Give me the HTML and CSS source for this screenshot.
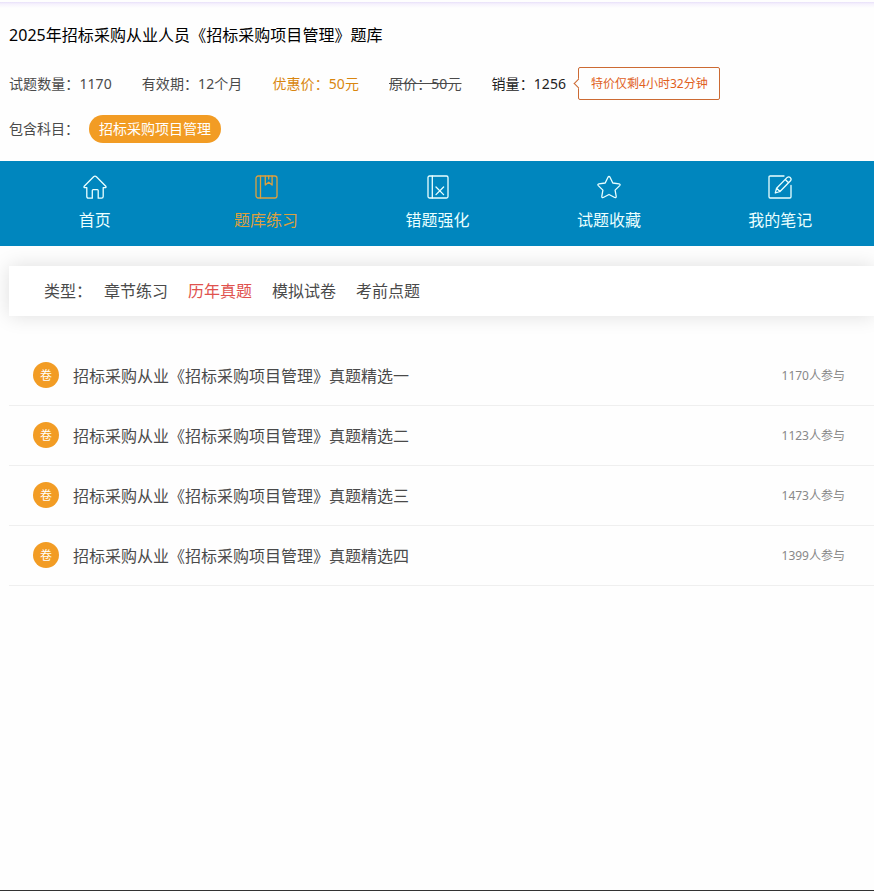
FILE: index.html
```html
<!DOCTYPE html>
<html lang="zh-CN">
<head>
  <meta charset="UTF-8">
  <meta name="viewport" content="width=device-width, initial-scale=1.0">
  <title>招标采购项目管理题库</title>
  <link rel="stylesheet" href="styles.css">
</head>
<body>
  <div class="header">
    <h1 class="title">2025年招标采购从业人员《招标采购项目管理》题库</h1>
    <div class="info">
      <span>试题数量：1170</span>
      <span>有效期：12个月</span>
      <span class="price">优惠价：50元</span>
      <span class="old-price">原价：50元</span>
      <span class="sales">销量：1256</span>
      <span class="countdown">特价仅剩4小时32分钟</span>
    </div>
    <div class="subject">
      <span>包含科目：</span>
      <a class="subject-tag">招标采购项目管理</a>
    </div>
  </div>

  <div class="nav">
    <a class="nav-item">
      <svg class="nav-icon" viewBox="0 0 24 24"><path d="M3.8 12.6H1.4Q.6 12.2 1.2 11.3L10.6 1.7Q12 .5 13.4 1.7L22.8 11.3Q23.4 12.2 22.6 12.6H20.2V21.5Q20.2 23.2 18.5 23.2H15.2V15.5Q15.2 14.6 14.3 14.6H10.2Q9.3 14.6 9.3 15.5V23.2H5.5Q3.8 23.2 3.8 21.5Z"/></svg>
      <span>首页</span>
    </a>
    <a class="nav-item active">
      <svg class="nav-icon" viewBox="0 0 24 24"><rect x="2" y="1" width="21" height="22" rx="2.2"/><path d="M6.5 1V23M11.3 1V10L14.7 7.2L18.1 10V1M14.7 1V4"/></svg>
      <span>题库练习</span>
    </a>
    <a class="nav-item">
      <svg class="nav-icon" viewBox="0 0 24 24"><rect x="2" y="1" width="20" height="22" rx="1.5"/><path d="M6.3 1V23M10 12L17.6 19.6M17.6 12L10 19.6"/></svg>
      <span>错题强化</span>
    </a>
    <a class="nav-item">
      <svg class="nav-icon" viewBox="0 0 24 24"><path d="M11 2.2Q12 .8 13 2.2L15.8 8L22.1 8.9Q23.8 9.3 22.7 10.6L18.1 15.1L19.2 21.3Q19.3 23 17.7 22.5L12 19.5L6.3 22.5Q4.7 23 4.8 21.3L5.9 15.1L1.3 10.6Q.2 9.3 1.9 8.9L8.2 8Z"/></svg>
      <span>试题收藏</span>
    </a>
    <a class="nav-item">
      <svg class="nav-icon" viewBox="0 0 24 24"><path d="M16 1H2.2Q1 1 1 2.2V21.8Q1 23 2.2 23H21.8Q23 23 23 21.8V10.5"/><path d="M7.3 18L8.6 13.2L19.2 2.4Q20.8 1.2 22.3 2.6Q23.8 4.2 22.5 5.7L12 16.5ZM8.6 13.2L12 16.5M17.3 4.5L20.5 7.7"/></svg>
      <span>我的笔记</span>
    </a>
  </div>

  <div class="filter">
    <span class="filter-label">类型：</span>
    <a>章节练习</a>
    <a class="current">历年真题</a>
    <a>模拟试卷</a>
    <a>考前点题</a>
  </div>

  <div class="list">
    <div class="row">
      <span class="badge">卷</span>
      <a class="row-title">招标采购从业《招标采购项目管理》真题精选一</a>
      <span class="count">1170人参与</span>
    </div>
    <div class="row">
      <span class="badge">卷</span>
      <a class="row-title">招标采购从业《招标采购项目管理》真题精选二</a>
      <span class="count">1123人参与</span>
    </div>
    <div class="row">
      <span class="badge">卷</span>
      <a class="row-title">招标采购从业《招标采购项目管理》真题精选三</a>
      <span class="count">1473人参与</span>
    </div>
    <div class="row">
      <span class="badge">卷</span>
      <a class="row-title">招标采购从业《招标采购项目管理》真题精选四</a>
      <span class="count">1399人参与</span>
    </div>
  </div>
</body>
</html>
```
FILE: styles.css
```css
* {
  box-sizing: border-box;
}

body {
  margin: 0;
  height: 891px;
  display: flex;
  flex-direction: column;
  overflow: hidden;
  font-family: "Noto Sans", "Noto Sans CJK SC", sans-serif;
  font-size: 14px;
  color: #4a4a4a;
  background: #fefefe;
  border-bottom: 1px solid #333;
}

.header {
  height: 161px;
  padding: 19px 9px 0;
  background: linear-gradient(#fefefe 2px, #e8e0fa 2px, #f6f2fd 4px, #fefefe 8px);
}

.title {
  margin: 0;
  font-size: 16px;
  font-weight: 400;
  line-height: 32px;
  letter-spacing: 0.04px;
  color: #000;
}

.info {
  display: flex;
  gap: 30px;
  height: 33px;
  margin-top: 16px;
  line-height: 33px;
  letter-spacing: 0.08px;
  white-space: nowrap;
}

.price {
  color: #d9860f;
}

.old-price {
  text-decoration: line-through;
}

.sales {
  color: #222;
}

.countdown {
  position: relative;
  margin-left: -18px;
  padding: 0 11px 0 12px;
  font-size: 12px;
  line-height: 32px;
  letter-spacing: 0;
  color: #e0601c;
  border: 1px solid #cc6a33;
  border-radius: 2px;
}

/* arrow pointing at the sales number */
.countdown::before {
  content: "";
  position: absolute;
  left: -4px;
  top: 12px;
  width: 6px;
  height: 6px;
  background: #fefefe;
  border-left: 1px solid #cc6a33;
  border-bottom: 1px solid #cc6a33;
  transform: rotate(45deg);
}

.subject {
  display: flex;
  gap: 10px;
  margin-top: 15px;
  line-height: 28px;
}

.subject-tag {
  height: 28px;
  padding: 0 10px;
  color: #fff;
  background: #f29c24;
  border-radius: 14px;
}

.nav {
  display: flex;
  height: 85px;
  padding: 0 8px 0 9px;
  background: #0086be;
}

.nav-item {
  flex: 1;
  display: flex;
  flex-direction: column;
  align-items: center;
  padding-top: 14px;
  font-size: 16px;
  line-height: 24px;
  color: #eaffff;
}

.nav-item.active {
  color: #dda03e;
}

.nav-icon {
  width: 24px;
  height: 24px;
  margin-bottom: 9px;
  fill: none;
  stroke: currentColor;
  stroke-width: 1.3;
  stroke-linejoin: round;
  stroke-linecap: round;
}

.filter {
  display: flex;
  gap: 20px;
  height: 50px;
  margin: 20px 0 0 9px;
  padding-left: 35px;
  font-size: 16px;
  line-height: 50px;
  background: #fff;
  box-shadow: 0 0 20px rgba(0, 0, 0, 0.13);
}

.filter-label {
  margin-right: -8px;
}

.current {
  color: #e0524e;
}

.list {
  margin: 30px 0 0 9px;
}

.row {
  display: flex;
  align-items: center;
  height: 60px;
  padding: 0 29px 2px 24px;
  border-bottom: 1px solid #efefef;
}

.badge {
  width: 26px;
  height: 26px;
  margin-right: 14px;
  line-height: 28px;
  text-align: center;
  font-size: 12px;
  color: #fff;
  background: #f29c24;
  border-radius: 50%;
}

.row-title {
  flex: 1;
  font-size: 16px;
}

.count {
  font-size: 12px;
  color: #888;
}
```
